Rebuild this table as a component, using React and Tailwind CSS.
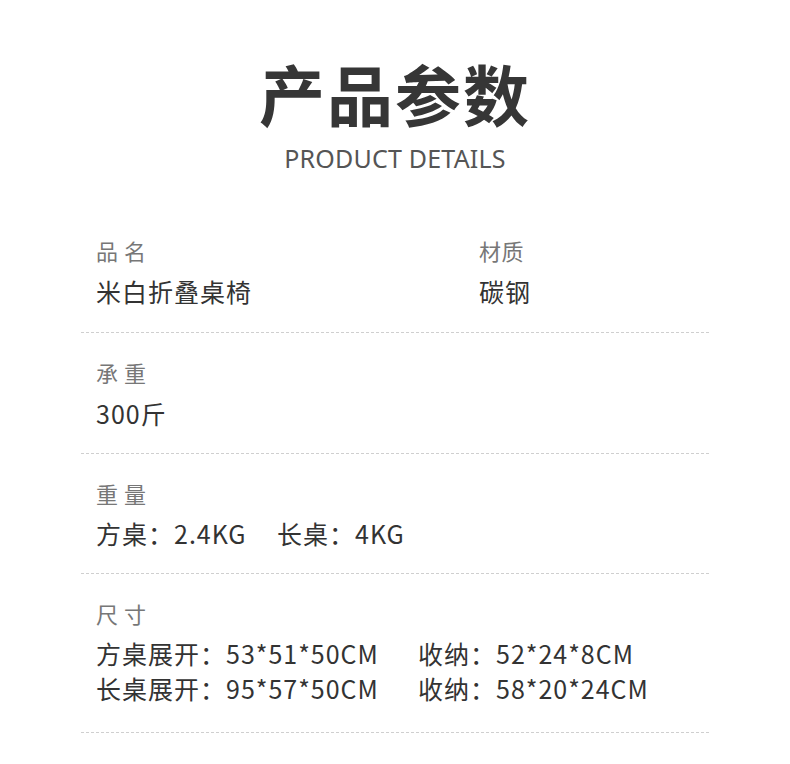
const cjk = "font-['Noto_Sans_CJK_SC',sans-serif]";

function Row({ children, last }) {
  return (
    <div className={`border-b border-dashed border-[#cfcfcf] px-[15px] ${last ? "pb-[26px]" : "pb-[22px]"}`}>
      {children}
    </div>
  );
}

function Label({ children }) {
  return <div className="text-[22px] leading-[22px] text-[#777] tracking-[0.5px]">{children}</div>;
}

function Value({ children }) {
  return <div className="text-[25px] leading-[35px] text-[#333] tracking-[1px]">{children}</div>;
}

export default function App() {
  return (
    <div className={`w-[790px] h-[764px] bg-white ${cjk}`}>
      <div className="pt-[59px] flex flex-col items-center">
        <h1 className="text-[66px] leading-[66px] font-bold text-[#363636] tracking-[2px]">产品参数</h1>
        <p className="mt-[21px] text-[25px] leading-[25px] text-[#555] tracking-[0.2px] font-['Noto_Sans',sans-serif]">PRODUCT DETAILS</p>
      </div>

      <div className="w-[628px] mx-auto mt-[68px]">
        <div className="border-b border-dashed border-[#cfcfcf] px-[15px] pb-[23px]">
          <div className="grid grid-cols-[383px_1fr]">
            <div>
              <Label>品 名</Label>
              <div className="mt-[13px]"><Value>米白折叠桌椅</Value></div>
            </div>
            <div>
              <Label>材质</Label>
              <div className="mt-[13px]"><Value>碳钢</Value></div>
            </div>
          </div>
        </div>

        <div className="pt-[28px]">
          <Row>
            <Label>承 重</Label>
            <div className="mt-[13px]"><Value>300斤</Value></div>
          </Row>
        </div>

        <div className="pt-[28px]">
          <Row>
            <Label>重 量</Label>
            <div className="mt-[12px]">
              <Value>
                <span className="inline-block w-[181px]">方桌：2.4KG</span>
                <span>长桌：4KG</span>
              </Value>
            </div>
          </Row>
        </div>

        <div className="pt-[28px]">
          <Row last>
            <Label>尺 寸</Label>
            <div className="mt-[12px]">
              <Value>
                <span className="inline-block w-[322px]">方桌展开：53*51*50CM</span>
                <span>收纳：52*24*8CM</span>
              </Value>
              <Value>
                <span className="inline-block w-[322px]">长桌展开：95*57*50CM</span>
                <span>收纳：58*20*24CM</span>
              </Value>
            </div>
          </Row>
        </div>
      </div>
    </div>
  );
}
